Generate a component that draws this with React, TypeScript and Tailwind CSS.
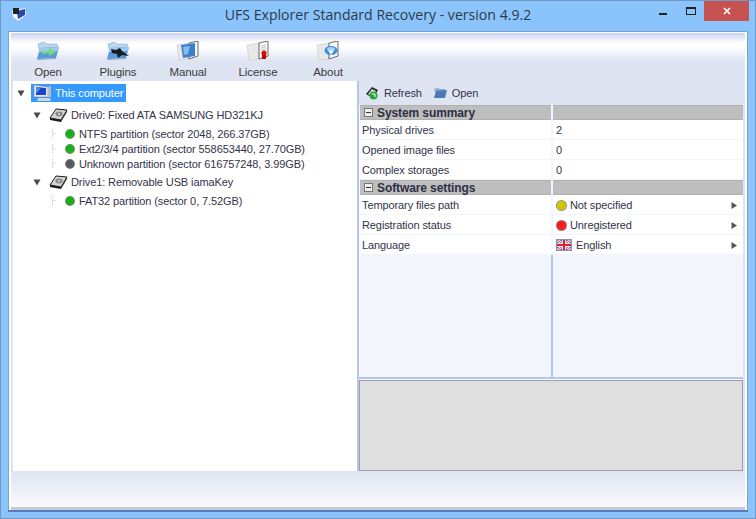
import React from "react";

function FolderIcon({ kind }: { kind: "arrow" | "plane" }) {
  return (
    <svg width="24" height="20" viewBox="0 0 24 20">
      <path d="M2 3 L8 1 L11 3 L21 3 L22 6 L3 8 Z" fill="#bcd6ee" stroke="#8aa8ca" strokeWidth=".6" />
      <path d="M4 7 L23 6 L20 17 L1 18 Z" fill="#5a9ad8" />
      <path d="M4 7 L23 6 L22 10 L3 11 Z" fill="#9ccaf0" />
      <path d="M1 18 L20 17 L20 18 L2 19 Z" fill="#8aa8ca" />
      {kind === "arrow" && <path d="M6 10 L13 10 L13 7 L20 11 L13 15 L13 12 L6 13 Z" fill="#78d878" />}
      {kind === "plane" && <path d="M5 8 L10 9 L14 7 L16 10 L23 15 L16 14 L12 17 L11 13 L6 12 Z" fill="#1a1a22" />}
    </svg>
  );
}

function BookIcon({ kind }: { kind: "manual" | "license" | "about" }) {
  return (
    <svg width="24" height="20" viewBox="0 0 24 20">
      <path d="M1 4 L13 2 L13 18 L3 19 Z" fill="#e8e8e8" stroke="#c0c0c0" strokeWidth=".5" />
      <path d="M13 2 L22 0 L22 15 L13 18 Z" fill="#f6f6f6" stroke="#333" strokeWidth=".7" />
      {kind === "manual" && <path d="M5 4 L19 2 L19 15 L7 17 Z" fill="#3c80cc" />}
      {kind === "manual" && <path d="M7 6 L14 5 L12 13 L8 14 Z" fill="#86bce8" />}
      {kind === "license" && (
        <>
          <path d="M15 5 L20 4 M15 7 L20 6 M15 9 L20 8" stroke="#bbb" strokeWidth=".8" />
          <circle cx="18" cy="12" r="2.6" fill="#d80e0e" />
          <path d="M16 14 H20 V18 H16 Z" fill="#c00000" />
        </>
      )}
      {kind === "about" && (
        <>
          <ellipse cx="15" cy="9.5" rx="6.5" ry="4.5" fill="#3f8ed8" />
          <ellipse cx="15" cy="8" rx="4" ry="2" fill="#a6d2f4" />
          <path d="M12 9.5 H18 L15 14 Z" fill="#ffffff" opacity=".9" />
        </>
      )}
    </svg>
  );
}

function ToolItem({ icon, label }: { icon: React.ReactNode; label: string }) {
  return (
    <div className="flex w-[70px] flex-col items-center">
      <div className="flex h-5 items-center">{icon}</div>
      <div className="mt-[3px] text-[11.5px] leading-[16px] text-[#3a3a3a]">{label}</div>
    </div>
  );
}

function Arrow() {
  return (
    <svg width="8" height="7" viewBox="0 0 8 7" className="shrink-0">
      <path d="M0.5 0.5 H7.5 L4 6.5 Z" fill="#4a4a4a" />
    </svg>
  );
}

function Computer() {
  return (
    <svg width="20" height="18" viewBox="0 0 20 18" className="shrink-0">
      <path d="M1 1 L15 3 L15 13 L1 13 Z" fill="#e8e8ec" stroke="#8a8a94" strokeWidth=".6" />
      <path d="M3 3 L13 4 L13 11 L3 11 Z" fill="#1746c8" />
      <path d="M3 3 L8 3.5 L5 8 L3 9 Z" fill="#4c8cf0" />
      <path d="M15 3 L18 2 L18 13 L15 13 Z" fill="#b5bcc8" />
      <path d="M5 14 H17 L18 17 H4 Z" fill="#d0d4dc" />
    </svg>
  );
}

function Drive() {
  return (
    <svg width="19" height="15" viewBox="0 0 19 15" className="shrink-0">
      <path d="M7 1 L18 2 L12 12 L1 10 Z" fill="#d4d4d4" stroke="#1a1a1a" strokeWidth="1" />
      <path d="M1 10 L12 12 L12 14 L1 12 Z" fill="#1a1a1a" />
      <path d="M12 12 L18 2 L18 4 L12 14 Z" fill="#333" />
      <ellipse cx="10" cy="6" rx="3.6" ry="2.4" fill="#8a8a8a" />
      <ellipse cx="10" cy="6" rx="1.1" ry=".8" fill="#e8e8e8" />
    </svg>
  );
}

function Dot({ c, size = 10 }: { c: string; size?: number }) {
  const id = "g" + c.replace("#", "");
  return (
    <svg width={size} height={size} viewBox="0 0 10 10" className="shrink-0">
      <defs>
        <radialGradient id={id} cx="40%" cy="35%" r="70%">
          <stop offset="0%" stopColor={c} />
          <stop offset="100%" stopColor={c} stopOpacity=".85" />
        </radialGradient>
      </defs>
      <circle cx="5" cy="5" r="5" fill="#333" opacity=".55" />
      <circle cx="5" cy="5" r="4.4" fill={`url(#${id})`} />
    </svg>
  );
}

function Partition({ c, text }: { c: string; text: string }) {
  return (
    <div className="flex h-[15px] items-center whitespace-nowrap pl-[39px]">
      <svg width="4" height="9" viewBox="0 0 4 9" className="shrink-0">
        <path d="M0.5 0 V9 M0.5 4.5 H4" stroke="#c8c8c8" strokeWidth="1" strokeDasharray="1 1" />
      </svg>
      <div className="ml-[9px] flex items-center">
        <Dot c={c} />
      </div>
      <span className="ml-[4px] pt-px">{text}</span>
    </div>
  );
}

function Section({ title }: { title: string }) {
  return (
    <div className="flex h-[15px] gap-[2px]">
      <div className="flex w-[191px] items-center border-b border-t border-[#b0b0b0] bg-[#bebebe] pl-[4px]">
        <div className="flex h-[9px] w-[9px] items-center justify-center border border-[#777] bg-[#eeeeee]">
          <div className="h-px w-[5px] bg-[#333]" />
        </div>
        <span className="ml-[4px] text-[12px] font-bold text-[#2e2e44]">{title}</span>
      </div>
      <div className="flex-1 border-b border-t border-[#b0b0b0] bg-[#bebebe]" />
    </div>
  );
}

function Flag() {
  return (
    <svg width="16" height="12" viewBox="0 0 16 12" className="shrink-0">
      <rect width="16" height="12" fill="#5c6cc0" />
      <path d="M0 0 L16 12 M16 0 L0 12" stroke="#f4f4f8" strokeWidth="2.4" />
      <path d="M0 0 L16 12 M16 0 L0 12" stroke="#e84050" strokeWidth=".9" />
      <path d="M8 0 V12 M0 6 H16" stroke="#f4f4f8" strokeWidth="3.6" />
      <path d="M8 0 V12 M0 6 H16" stroke="#e02030" strokeWidth="2" />
      <rect x=".5" y=".5" width="15" height="11" fill="none" stroke="#9090a8" strokeWidth="1" />
    </svg>
  );
}

function Row({ name, children, chevron }: { name: string; children: React.ReactNode; chevron?: boolean }) {
  return (
    <div className="flex h-[20px] gap-[2px] text-[#33334a]">
      <div className="flex w-[191px] items-center border-b border-[#f2f4fb] bg-white pl-[2px] pt-px">{name}</div>
      <div className="flex flex-1 items-center border-b border-[#f2f4fb] bg-white pl-[3px] pr-[6px] pt-px">
        <div className="flex flex-1 items-center">{children}</div>
        {chevron && (
          <svg width="6" height="7" viewBox="0 0 6 7">
            <path d="M0.5 0 L6 3.5 L0.5 7 Z" fill="#555" />
          </svg>
        )}
      </div>
    </div>
  );
}

export default function App() {
  return (
    <div className="flex h-[519px] w-[756px] flex-col overflow-hidden border border-[#6f9ac8] bg-[#8ac4fa] font-['Liberation_Sans',sans-serif] text-[11px] tracking-[-0.1px]">
      <div className="grid h-[30px] shrink-0 grid-cols-[1fr_auto_1fr] items-center">
        <div className="flex items-center pb-[5px] pl-[10px]">
          <svg width="16" height="16" viewBox="0 0 16 16">
            <path d="M1 5 L14 2 L15 9 L7 15 L2 11 Z" fill="#f4f4f8" />
            <path d="M6 5 L14 3 L14 9 L7 13 Z" fill="#2a48b0" />
            <path d="M2 2 H8 V8 H2 Z" fill="#222" />
          </svg>
        </div>
        <div className="pb-[2px] font-['Open_Sans',sans-serif] text-[14.1px] leading-[20px] tracking-normal text-[#2c3a4a]">
          UFS Explorer Standard Recovery - version 4.9.2
        </div>
        <div className="flex items-start self-start justify-end pr-[5px]">
          <div className="flex h-[20px] w-[30px] items-end justify-center pb-[6px]">
            <div className="h-[2px] w-[8px] bg-[#222]" />
          </div>
          <div className="ml-[8px] mt-[6px] h-[8px] w-[10px] border border-t-[2px] border-[#222]" />
          <div className="ml-[8px] mr-[1px] flex h-[20px] w-[45px] items-center justify-center bg-[#c75050]">
            <svg width="8" height="8" viewBox="0 0 8 8">
              <path d="M1 1 L7 7 M7 1 L1 7" stroke="#fff" strokeWidth="1.7" />
            </svg>
          </div>
        </div>
      </div>

      <div className="mx-[7px] flex min-h-0 flex-1 flex-col border-x border-t border-[#7ba3d0]">
        <div className="flex min-h-0 flex-1 flex-col border-x-2 border-t border-white">
          <div className="flex h-[48px] shrink-0 pl-[2px] pt-[8px] [background-image:linear-gradient(#c9d2ee_0px,#ffffff_10px,#ffffff_14px,#dfe4f2_28px)]">
            <ToolItem icon={<FolderIcon kind="arrow" />} label="Open" />
            <ToolItem icon={<FolderIcon kind="plane" />} label="Plugins" />
            <ToolItem icon={<BookIcon kind="manual" />} label="Manual" />
            <ToolItem icon={<BookIcon kind="license" />} label="License" />
            <ToolItem icon={<BookIcon kind="about" />} label="About" />
          </div>
          <div className="flex min-h-0 flex-1 border-x-2 border-[#dfe4f2] bg-[#dfe4f2]">
            <div className="w-[344px] shrink-0 bg-white pt-[3px] text-[#33334a]">
              <div className="flex h-[18px] items-center pl-[4px]">
                <Arrow />
                <div className="ml-[6px] flex h-[18px] items-center bg-[#3399ff] pl-[2px] pr-[3px] text-white">
                  <Computer />
                  <span className="ml-[2px]">This computer</span>
                </div>
              </div>
              <div className="mt-[4px] flex h-[18px] items-center pl-[20px]">
                <Arrow />
                <div className="ml-[8px] flex items-center">
                  <Drive />
                </div>
                <span className="ml-[3px] whitespace-nowrap">Drive0: Fixed ATA SAMSUNG HD321KJ</span>
              </div>
              <div className="mt-[2px]">
                <Partition c="#12b012" text="NTFS partition (sector 2048, 266.37GB)" />
                <Partition c="#12b012" text="Ext2/3/4 partition (sector 558653440, 27.70GB)" />
                <Partition c="#555560" text="Unknown partition (sector 616757248, 3.99GB)" />
              </div>
              <div className="mt-[2px] flex h-[18px] items-center pl-[20px]">
                <Arrow />
                <div className="ml-[8px] flex items-center">
                  <Drive />
                </div>
                <span className="ml-[3px] whitespace-nowrap">Drive1: Removable USB iamaKey</span>
              </div>
              <div className="mt-[2px]">
                <Partition c="#12b012" text="FAT32 partition (sector 0, 7.52GB)" />
              </div>
            </div>
            <div className="flex min-w-0 flex-1 flex-col border-l-2 border-[#b6c6ec]">
              <div className="flex h-[24px] shrink-0 items-center bg-[#dfe4f2] pl-[6px] text-[#33334a]">
                <svg width="14" height="14" viewBox="0 0 14 14">
                  <path d="M1 8 L7 1 L13 4 L8 12 Z" fill="#222" />
                  <path d="M3 8 L7 3 L11 5 L7 10 Z" fill="#dcdcdc" />
                  <circle cx="8.5" cy="9.5" r="4" fill="#28a838" />
                  <path d="M7 8 H10 V11" stroke="#fff" strokeWidth="1" fill="none" />
                </svg>
                <span className="ml-[5px]">Refresh</span>
                <svg width="14" height="12" viewBox="0 0 14 12" className="ml-[11px]">
                  <path d="M1 2 L5 1 L7 2 L12 2 L12 4 L2 5 Z" fill="#8aa8d8" />
                  <path d="M3 4 L14 3 L12 11 L1 11 Z" fill="#4f78b8" />
                </svg>
                <span className="ml-[5px]">Open</span>
              </div>
              <div className="flex min-h-0 flex-1 flex-col bg-[#f4f6fd] pl-px">
                <Section title="System summary" />
                <Row name="Physical drives">2</Row>
                <Row name="Opened image files">0</Row>
                <Row name="Complex storages">0</Row>
                <Section title="Software settings" />
                <Row name="Temporary files path" chevron>
                  <Dot c="#d0c800" size={11} />
                  <span className="ml-[3px]">Not specified</span>
                </Row>
                <Row name="Registration status" chevron>
                  <Dot c="#f81818" size={11} />
                  <span className="ml-[3px]">Unregistered</span>
                </Row>
                <Row name="Language" chevron>
                  <Flag />
                  <span className="ml-[4px]">English</span>
                </Row>
                <div className="flex flex-1 gap-[2px]">
                  <div className="w-[191px]" />
                  <div className="ml-[-2px] flex-1 border-l-2 border-[#b6c6ec]" />
                </div>
              </div>
              <div className="h-[3px] shrink-0 border-t-2 border-[#b6c6ec] bg-[#f4f6fd]" />
              <div className="h-[91px] shrink-0 border border-[#a0a0a0] bg-[#dfdfdf]" />
            </div>
          </div>
          <div className="h-[39px] shrink-0 border-b-[3px] border-[#c4cade] bg-gradient-to-b from-[#dfe4f2] to-[#f9fafc]" />
        </div>
      </div>
      <div className="mx-[7px] h-[2px] shrink-0 bg-[#5a7ab8]" />
      <div className="h-[6px] shrink-0" />
    </div>
  );
}
